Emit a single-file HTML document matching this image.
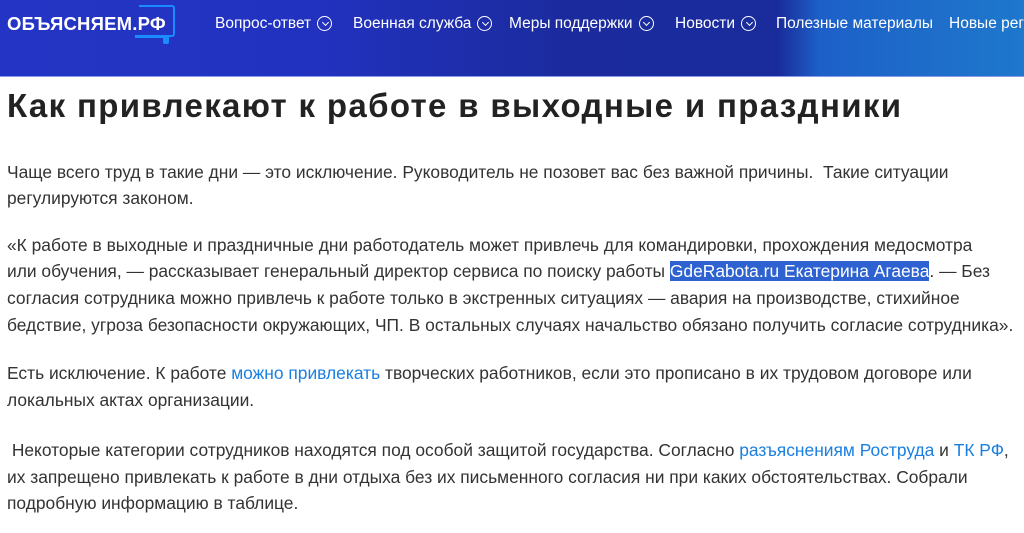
<!DOCTYPE html>
<html><head><meta charset="utf-8"><style>
*{margin:0;padding:0;box-sizing:border-box}
body{width:1024px;height:533px;overflow:hidden;background:#fff;font-family:"Liberation Sans","DejaVu Sans",sans-serif;color:#333}
.hdr{position:absolute;left:0;top:0;width:1024px;height:77px;background:linear-gradient(90deg,#2434c4 0%,#2232c0 30%,#1b2b9e 55%,#1a2c9c 76%,#1d60c8 80%,#1e78cc 100%);border-bottom:1px solid #8a9ae8}
.logo{position:absolute;left:7px;top:13px;color:#fff;font-weight:bold;font-size:18.5px;letter-spacing:0.2px}
.bub{position:absolute;left:139px;top:5px;width:36px;height:32px;border:2.5px solid #1a8cff;border-left:none;border-radius:0 3px 3px 0}
.bub:before{content:"";position:absolute;left:0;top:-2.5px;width:4px;height:2.5px;background:#1a8cff}
.bub:after{content:"";position:absolute;left:-4px;bottom:-2.5px;width:30px;height:2.5px;background:#1a8cff}
.tail{position:absolute;left:163px;top:37px;width:6px;height:7px;background:#1a8cff;border-radius:0 0 2px 2px}
.nav{position:absolute;top:15px;color:#fff;font-size:15.5px;white-space:nowrap}
.ch{display:inline-block;width:15px;height:15px;border:1px solid #fff;border-radius:50%;vertical-align:-3px;margin-left:6px;position:relative}
.ch:after{content:"";position:absolute;left:4.5px;top:3px;width:4px;height:4px;border-right:1.3px solid #fff;border-bottom:1.3px solid #fff;transform:rotate(45deg)}
h1{position:absolute;left:7px;top:87px;font-size:33px;font-weight:bold;color:#222;white-space:nowrap;letter-spacing:1.35px}
.l{position:absolute;left:7px;font-size:17.4px;white-space:nowrap;line-height:22px}
a{color:#1a7fe0;text-decoration:none}
.sel{background:#2e62d0;color:#fff}
</style></head><body>
<div class="hdr">
<div class="bub"></div><div class="tail"></div>
<div class="logo">ОБЪЯСНЯЕМ.РФ</div>
<div class="nav" style="left:215px">Вопрос-ответ<span class="ch"></span></div>
<div class="nav" style="left:353px">Военная служба<span class="ch"></span></div>
<div class="nav" style="left:509px">Меры поддержки<span class="ch"></span></div>
<div class="nav" style="left:675px">Новости<span class="ch"></span></div>
<div class="nav" style="left:776px">Полезные материалы</div>
<div class="nav" style="left:949px">Новые регионы</div>
</div>
<h1>Как привлекают к работе в выходные и праздники</h1>
<div class="l" style="top:161px">Чаще всего труд в такие дни — это исключение. Руководитель не позовет вас без важной причины.&nbsp; Такие ситуации</div>
<div class="l" style="top:187px">регулируются законом.</div>
<div class="l" style="top:234px">«К работе в выходные и праздничные дни работодатель может привлечь для командировки, прохождения медосмотра</div>
<div class="l" style="top:260px">или обучения, — рассказывает генеральный директор сервиса по поиску работы <span class="sel">GdeRabota.ru Екатерина Агаева</span>. — Без</div>
<div class="l" style="top:287px">согласия сотрудника можно привлечь к работе только в экстренных ситуациях — авария на производстве, стихийное</div>
<div class="l" style="top:314px">бедствие, угроза безопасности окружающих, ЧП. В остальных случаях начальство обязано получить согласие сотрудника».</div>
<div class="l" style="top:362px">Есть исключение. К работе <a>можно привлекать</a> творческих работников, если это прописано в их трудовом договоре или</div>
<div class="l" style="top:389px">локальных актах организации.</div>
<div class="l" style="top:439px">&nbsp;Некоторые категории сотрудников находятся под особой защитой государства. Согласно <a>разъяснениям Роструда</a> и <a>ТК РФ</a>,</div>
<div class="l" style="top:466px">их запрещено привлекать к работе в дни отдыха без их письменного согласия ни при каких обстоятельствах. Собрали</div>
<div class="l" style="top:492px">подробную информацию в таблице.</div>
</body></html>
